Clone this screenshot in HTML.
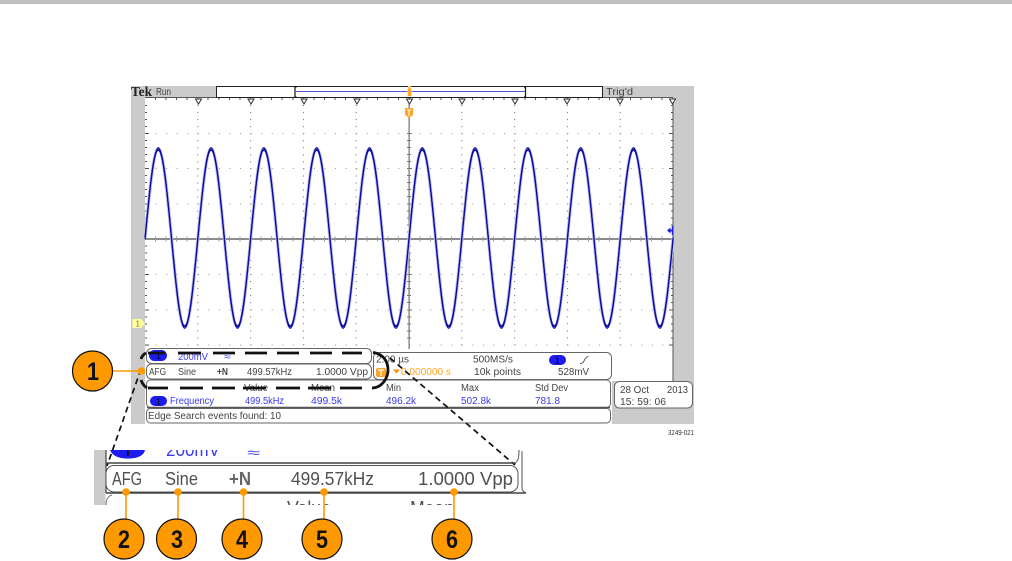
<!DOCTYPE html>
<html>
<head>
<meta charset="utf-8">
<style>
html,body{margin:0;padding:0;background:#fff;width:1012px;height:561px;overflow:hidden}
svg{display:block;position:absolute;left:0;top:0}
text{font-family:"Liberation Sans",sans-serif}
.t{font-size:9.7px;fill:#444}
.b{font-size:9.7px;fill:#3a3af0}
.o{font-size:10px;fill:#ffa526}
.z{font-size:18px;fill:#505050}
.n{font-size:25px;font-weight:bold;fill:#111;text-anchor:middle}
.c{fill:#f90;stroke:#111;stroke-width:1.2}
.l{stroke:#f90;stroke-width:1.6}
.d{fill:#f90}
.p{fill:#fff;stroke:#666;stroke-width:1}
</style>
</head>
<body>
<svg width="1012" height="561" viewBox="0 0 1012 561" xmlns="http://www.w3.org/2000/svg">
<defs>
<path id="w" d="M145.1 238c4.3-45.6 8.42-89 13.2-89s8.9 43.4 13.2 89c4.3 45.6 8.42 89 13.2 89s8.9-43.4 13.2-89c4.3-45.6 8.42-89 13.2-89s8.9 43.4 13.2 89c4.3 45.6 8.42 89 13.2 89s8.9-43.4 13.2-89c4.3-45.6 8.42-89 13.2-89s8.9 43.4 13.2 89c4.3 45.6 8.42 89 13.2 89s8.9-43.4 13.2-89c4.3-45.6 8.42-89 13.2-89s8.9 43.4 13.2 89c4.3 45.6 8.42 89 13.2 89s8.9-43.4 13.2-89c4.3-45.6 8.42-89 13.2-89s8.9 43.4 13.2 89c4.3 45.6 8.42 89 13.2 89s8.9-43.4 13.2-89c4.3-45.6 8.42-89 13.2-89s8.9 43.4 13.2 89c4.3 45.6 8.42 89 13.2 89s8.9-43.4 13.2-89c4.3-45.6 8.42-89 13.2-89s8.9 43.4 13.2 89c4.3 45.6 8.42 89 13.2 89s8.9-43.4 13.2-89c4.3-45.6 8.42-89 13.2-89s8.9 43.4 13.2 89c4.3 45.6 8.42 89 13.2 89s8.9-43.4 13.2-89c4.3-45.6 8.42-89 13.2-89s8.9 43.4 13.2 89c4.3 45.6 8.42 89 13.2 89s8.9-43.4 13.2-89c4.3-45.6 8.42-89 13.2-89s8.9 43.4 13.2 89c4.3 45.6 8.42 89 13.2 89s8.9-43.4 13.2-89" fill="none"/>
<path id="tri" d="M-3 0h6l-3 5z" fill="#fff" stroke="#333" stroke-width="1"/>
</defs>

<!-- top bar -->
<rect x="0" y="0" width="1012" height="4" fill="#c0c0c0"/>

<!-- scope body -->
<rect x="131" y="86" width="563" height="338" fill="#cbcbcb"/>
<rect x="145" y="97" width="528" height="284" fill="#fff"/>
<rect x="145" y="349" width="467" height="75" fill="#fff"/>

<!-- graticule dots -->
<g stroke="#666" stroke-width="1" fill="none" stroke-dasharray="1 6.04">
<path d="M197.8 98V349M250.6 98V349M303.4 98V349M356.2 98V349M461.8 98V349M514.6 98V349M567.4 98V349M620.2 98V349"/>
</g>
<g stroke="#999" stroke-width="1" fill="none" stroke-dasharray="1 9.56">
<path d="M145 133.5H673M145 168.5H673M145 204H673M145 274.5H673M145 310H673M145 345H673"/>
</g>
<!-- edge ticks -->
<g stroke="#555" stroke-width="1" fill="none">
<path d="M673 98V381M145 97.5H673"/>
<path d="M145 105.5h2M145 112.5h2M145 119.5h2M145 126.5h2M145 133.5h4M145 140.5h2M145 147.5h2M145 154.5h2M145 161.5h2M145 168.5h4M145 175.5h2M145 182.5h2M145 189.5h2M145 196.5h2M145 204h4M145 211h2M145 218h2M145 225h2M145 232h2M145 246h2M145 253h2M145 260h2M145 267h2M145 274.5h4M145 281.5h2M145 288.5h2M145 295.5h2M145 302.5h2M145 310h4M145 317h2M145 324h2M145 331h2M145 338h2M145 345h4"/>
<path d="M673 105.5h-2M673 112.5h-2M673 119.5h-2M673 126.5h-2M673 133.5h-4M673 140.5h-2M673 147.5h-2M673 154.5h-2M673 161.5h-2M673 168.5h-4M673 175.5h-2M673 182.5h-2M673 189.5h-2M673 196.5h-2M673 204h-4M673 211h-2M673 218h-2M673 225h-2M673 246h-2M673 253h-2M673 260h-2M673 267h-2M673 274.5h-4M673 281.5h-2M673 288.5h-2M673 295.5h-2M673 302.5h-2M673 310h-4M673 317h-2M673 324h-2M673 331h-2M673 338h-2M673 345h-4"/>
</g>
<!-- top ticks -->
<path d="M155.5 98v2M166 98v2M176.500 98v2M187 98v2M208 98v2M219 98v2M229.500 98v2M240 98v2M261 98v2M271.500 98v2M282 98v2M293 98v2M314 98v2M324.500 98v2M335 98v2M345.500 98v2M367 98v2M377.500 98v2M388 98v2M398.500 98v2M420 98v2M430.500 98v2M441 98v2M451.500 98v2M472.500 98v2M483 98v2M493.500 98v2M504 98v2M525 98v2M535.500 98v2M546 98v2M557 98v2M578 98v2M588.500 98v2M599 98v2M609.500 98v2M630.500 98v2M641 98v2M651.500 98v2M662 98v2" stroke="#555" fill="none"/>
<!-- centre lines -->
<rect x="145" y="238" width="528" height="2" fill="#8c8c8c"/>
<rect x="408.600" y="98" width="1" height="251" fill="#555"/>
<path d="M155.500 236.500v5M166 236.500v5M176.500 236.500v5M187 236.500v5M197.800 236.500v5M208 236.500v5M219 236.500v5M229.500 236.500v5M240 236.500v5M250.600 236.500v5M261 236.500v5M271.500 236.500v5M282 236.500v5M293 236.500v5M303.400 236.500v5M314 236.500v5M324.500 236.500v5M335 236.500v5M345.500 236.500v5M356.200 236.500v5M367 236.500v5M377.500 236.500v5M388 236.500v5M398.500 236.500v5M420 236.500v5M430.500 236.500v5M441 236.500v5M451.500 236.500v5M461.800 236.500v5M472.500 236.500v5M483 236.500v5M493.500 236.500v5M504 236.500v5M514.600 236.500v5M525 236.500v5M535.500 236.500v5M546 236.500v5M557 236.500v5M567.400 236.500v5M578 236.500v5M588.500 236.500v5M599 236.500v5M609.500 236.500v5M620.200 236.500v5M630.500 236.500v5M641 236.500v5M651.500 236.500v5M662 236.500v5" stroke="#999" stroke-width="1" fill="none"/>
<path d="M407 133.500h5M407 168.500h5M407 204h5M407 274.500h5M407 310h5M407 140.500h4M407 147.500h4M407 154.500h4M407 161.500h4M407 175.500h4M407 182.500h4M407 189.500h4M407 196.500h4M407 211h4M407 218h4M407 225h4M407 232h4M407 246h4M407 253h4M407 260h4M407 267h4M407 281.500h4M407 288.500h4M407 295.500h4M407 302.500h4M407 317h4M407 324h4M407 331h4M407 338h4" stroke="#777" fill="none"/>

<!-- waveform -->
<use href="#w" stroke="#c0c0ec" stroke-width="3.200"/>
<use href="#w" stroke="#0c0ca0" stroke-width="1.100" transform="translate(0,-1.300)"/>
<use href="#w" stroke="#0c0ca0" stroke-width="1.100"/>
<use href="#w" stroke="#0c0ca0" stroke-width="1.100" transform="translate(0,1.300)"/>

<!-- top status -->
<rect x="216.500" y="86.500" width="386" height="11" fill="#fff" stroke="#222" stroke-width="1"/>
<path d="M296.500 87h-1.500v10h1.500M524 87h1.500v10h-1.500" fill="none" stroke="#111" stroke-width="1.200"/>
<path d="M296 91.500H525" stroke="#5050d8" stroke-width="1"/>
<path d="M408 86h3l-.5 2.500h1v8h-4v-8h1z" fill="#ffa526" stroke="#fff" stroke-width=".4"/>
<text x="131" y="96" font-size="13.500" font-weight="bold" fill="#222" textLength="21" lengthAdjust="spacingAndGlyphs" style="font-family:'Liberation Serif',serif">Tek</text>
<text x="156" y="95" class="t" textLength="15" lengthAdjust="spacingAndGlyphs">Run</text>
<text x="606" y="95" class="t" textLength="27" lengthAdjust="spacingAndGlyphs">Trig'd</text>

<!-- trigger position markers -->
<g>
<use href="#tri" x="198.500" y="99"/><use href="#tri" x="251" y="99"/><use href="#tri" x="304" y="99"/><use href="#tri" x="357" y="99"/><use href="#tri" x="409.500" y="99"/><use href="#tri" x="462" y="99"/><use href="#tri" x="515" y="99"/><use href="#tri" x="567" y="99"/><use href="#tri" x="620" y="99"/><use href="#tri" x="672.500" y="99"/>
</g>
<path d="M405 108h8v7l-4 3-4-3z" fill="#ffa526"/>
<path d="M407 110h4M409 110v6" stroke="#fff" stroke-width="1.100"/>
<path d="M667 230.500l3.500-3v2h2.500v2h-2.500v2z" fill="#2020e0"/><path d="M672.500 226v9" stroke="#2020e0" stroke-width="1.400"/>
<!-- ch1 ground marker -->
<path d="M132.500 319h8.500l4 4.500-4 4.500h-8.500z" fill="#ffff99"/>
<text x="135.500" y="326.500" font-size="8" fill="#777">1</text>

<!-- readout panels -->
<rect x="146.500" y="348.500" width="225" height="15" rx="5" class="p"/>
<rect x="146.500" y="364" width="225" height="15" rx="5" class="p"/>
<rect x="373.500" y="352.500" width="238" height="27" rx="5" class="p"/>
<rect x="146.500" y="380" width="464" height="27.500" rx="4" class="p"/>
<path d="M147 407.500H610" stroke="#555" stroke-width="1.600"/>
<rect x="146.500" y="408.500" width="464" height="14.500" rx="4" class="p"/>
<rect x="614.500" y="381.500" width="78" height="26.500" rx="5" class="p"/>

<!-- pills -->
<rect x="149" y="350" width="18" height="11" rx="5.500" fill="#1c1cf0"/>
<rect x="150" y="396" width="17" height="10" rx="5" fill="#1c1cf0"/>
<rect x="549" y="355" width="17" height="10" rx="5" fill="#1c1cf0"/>
<text x="156" y="404.500" font-size="8.500" fill="#001">1</text>
<text x="555" y="363.500" font-size="8.500" fill="#001">1</text>
<text x="156" y="359" font-size="8.500" fill="#001">1</text>

<!-- readout text -->
<text x="178" y="360" class="b" textLength="30" lengthAdjust="spacingAndGlyphs">200mV</text>
<text x="224" y="360" class="b" textLength="7" lengthAdjust="spacingAndGlyphs">&#8776;</text>
<text x="149" y="375" class="t" textLength="17" lengthAdjust="spacingAndGlyphs">AFG</text>
<text x="178" y="375" class="t" textLength="18" lengthAdjust="spacingAndGlyphs">Sine</text>
<text x="217" y="375" class="t" font-weight="bold" textLength="11" lengthAdjust="spacingAndGlyphs">+N</text>
<text x="247" y="375" class="t" textLength="45" lengthAdjust="spacingAndGlyphs">499.57kHz</text>
<text x="316" y="375" class="t" textLength="52" lengthAdjust="spacingAndGlyphs">1.0000 Vpp</text>

<text x="244" y="391" class="t" textLength="24" lengthAdjust="spacingAndGlyphs">Value</text>
<text x="311" y="391" class="t" textLength="24" lengthAdjust="spacingAndGlyphs">Mean</text>
<text x="386" y="391" class="t" textLength="15" lengthAdjust="spacingAndGlyphs">Min</text>
<text x="461" y="391" class="t" textLength="18" lengthAdjust="spacingAndGlyphs">Max</text>
<text x="535" y="391" class="t" textLength="33" lengthAdjust="spacingAndGlyphs">Std Dev</text>

<text x="170" y="404" class="b" textLength="44" lengthAdjust="spacingAndGlyphs">Frequency</text>
<text x="245" y="404" class="b" textLength="39" lengthAdjust="spacingAndGlyphs">499.5kHz</text>
<text x="311" y="404" class="b" textLength="31" lengthAdjust="spacingAndGlyphs">499.5k</text>
<text x="386" y="404" class="b" textLength="30" lengthAdjust="spacingAndGlyphs">496.2k</text>
<text x="461" y="404" class="b" textLength="30" lengthAdjust="spacingAndGlyphs">502.8k</text>
<text x="535" y="404" class="b" textLength="25" lengthAdjust="spacingAndGlyphs">781.8</text>

<text x="148" y="419" class="t" textLength="133" lengthAdjust="spacingAndGlyphs">Edge Search events found: 10</text>

<text x="376" y="362.500" class="t" textLength="33" lengthAdjust="spacingAndGlyphs">2.00 &#181;s</text>
<text x="473" y="362.500" class="t" textLength="40" lengthAdjust="spacingAndGlyphs">500MS/s</text>
<path d="M580 363.500c2.500 0 3.500-1 4.500-3.500s2-3.500 4-3.500" fill="none" stroke="#333" stroke-width=".8"/>
<text x="474" y="375" class="t" textLength="47" lengthAdjust="spacingAndGlyphs">10k points</text>
<text x="558" y="375" class="t" textLength="31" lengthAdjust="spacingAndGlyphs">528mV</text>
<rect x="376" y="368" width="10" height="9" rx="2" fill="#ffa526"/>
<path d="M378 370h6M381 370v6" stroke="#fff" stroke-width="1.200"/>
<path d="M386 372h4" stroke="#ffa526" stroke-width="1"/>
<path d="M393 369.500h7l-3.500 4z" fill="#ff8c00"/>
<text x="401" y="375" class="o" textLength="50" lengthAdjust="spacingAndGlyphs">0.000000 s</text>

<text x="620" y="393" class="t" textLength="29" lengthAdjust="spacingAndGlyphs">28 Oct</text>
<text x="667" y="393" class="t" textLength="21" lengthAdjust="spacingAndGlyphs">2013</text>
<text x="620" y="405" class="t" textLength="46" lengthAdjust="spacingAndGlyphs">15: 59: 06</text>

<text x="668" y="435" font-size="7.500" fill="#333" textLength="26" lengthAdjust="spacingAndGlyphs">3249-021</text>

<!-- zoom-in black dashed shape -->
<g fill="none" stroke="#111" stroke-width="2.800">
<path d="M148 353h17M178 353h23M213 353h22M245 353h22M277 353h22M310 353h22M342 353h20"/>
<path d="M148 388h20M180 388h23M212 388h23M243 388h23M276 388h24M308 388h23M340 388h22"/>
<path d="M373 352.500c9 1 15 8 15 17s-6 18-16 18.500"/>
<path d="M141 359c1-3 3-5 5-6"/>
<path d="M141 380c1 3 3 6 6 8"/>
</g>
<g fill="none" stroke="#111" stroke-width="1.700" stroke-dasharray="6 4">
<path d="M141 369L107 466"/>
<path d="M390 358L515 465"/>
</g>

<!-- magnified view -->
<rect x="94" y="450" width="11.500" height="55" fill="#cbcbcb"/>
<path d="M110 450h35c-1 5-6 8.500-17 8.500s-16-3.500-18-8.500z" fill="#1c1cf0"/>
<rect x="127" y="450" width="1.800" height="6" fill="#111"/>
<path d="M106 450V493" stroke="#444" stroke-width="1.200"/>
<path d="M106 463H516" stroke="#444" stroke-width="1.400"/>
<rect x="106" y="465.500" width="412" height="26.500" rx="8" fill="#fff" stroke="#555" stroke-width="1"/>
<path d="M106 493H526" stroke="#444" stroke-width="1.400"/>
<path d="M522 451V488c0 3 2 4 4 5M516 462c2-1 3-4 3-12" stroke="#555" stroke-width="1" fill="none"/>
<path d="M106 505c0-6 2-9 6-10" stroke="#777" fill="none"/>
<text x="166" y="456" font-size="18" fill="#3a3af0" textLength="54" lengthAdjust="spacingAndGlyphs">200mV</text>
<text x="247" y="457" font-size="13" fill="#3a3af0" textLength="13" lengthAdjust="spacingAndGlyphs">&#8776;</text>
<rect x="160" y="440" width="110" height="10" fill="#fff"/>
<text x="112" y="485" class="z" textLength="30" lengthAdjust="spacingAndGlyphs">AFG</text>
<text x="165" y="485" class="z" textLength="33" lengthAdjust="spacingAndGlyphs">Sine</text>
<text x="229" y="485" class="z" font-weight="bold" textLength="22" lengthAdjust="spacingAndGlyphs" style="fill:#666">+N</text>
<text x="291" y="485" class="z" textLength="83" lengthAdjust="spacingAndGlyphs">499.57kHz</text>
<text x="418" y="485" class="z" textLength="95" lengthAdjust="spacingAndGlyphs">1.0000 Vpp</text>
<text x="287" y="514" class="z" textLength="44" lengthAdjust="spacingAndGlyphs">Value</text>
<text x="410" y="514" class="z" textLength="44" lengthAdjust="spacingAndGlyphs">Mean</text>
<rect x="280" y="505" width="180" height="12" fill="#fff"/>

<!-- callouts -->
<path class="l" d="M113 371H141"/>
<circle class="d" cx="141.500" cy="371" r="3.800"/>
<circle class="c" cx="92.500" cy="371" r="20"/>
<text class="n" x="93" y="380" textLength="12" lengthAdjust="spacingAndGlyphs">1</text>

<path class="l" d="M126 492V520M178 492V520M243.500 492V520M324 492V520M454 492V520"/>
<circle class="d" cx="126" cy="492" r="3.800"/>
<circle class="d" cx="178" cy="492" r="3.800"/>
<circle class="d" cx="243.500" cy="492" r="3.800"/>
<circle class="d" cx="324" cy="492" r="3.800"/>
<circle class="d" cx="454" cy="492" r="3.800"/>
<circle class="c" cx="124" cy="539" r="20"/><text class="n" x="124" y="548" textLength="12" lengthAdjust="spacingAndGlyphs">2</text>
<circle class="c" cx="176.500" cy="539" r="20"/><text class="n" x="177" y="548" textLength="12" lengthAdjust="spacingAndGlyphs">3</text>
<circle class="c" cx="242" cy="539" r="20"/><text class="n" x="242" y="548" textLength="12" lengthAdjust="spacingAndGlyphs">4</text>
<circle class="c" cx="322" cy="539" r="20"/><text class="n" x="322" y="548" textLength="12" lengthAdjust="spacingAndGlyphs">5</text>
<circle class="c" cx="452" cy="539" r="20"/><text class="n" x="452" y="548" textLength="12" lengthAdjust="spacingAndGlyphs">6</text>
</svg>
</body>
</html>
